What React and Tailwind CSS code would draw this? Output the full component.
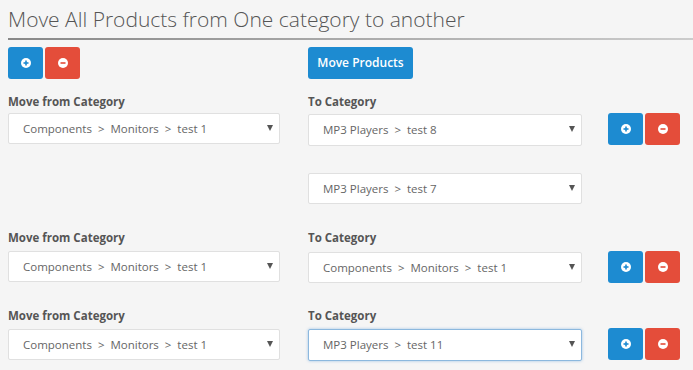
import React from "react";

const PlusIcon = ({ color }) => (
  <svg width="10" height="10" viewBox="0 0 10 10">
    <circle cx="5" cy="5" r="5" fill="#fff" />
    <rect x="2.5" y="4.2" width="5" height="1.6" fill={color} />
    <rect x="4.2" y="2.5" width="1.6" height="5" fill={color} />
  </svg>
);
const MinusIcon = ({ color }) => (
  <svg width="10" height="10" viewBox="0 0 10 10">
    <circle cx="5" cy="5" r="5" fill="#fff" />
    <rect x="2.5" y="4.2" width="5" height="1.6" fill={color} />
  </svg>
);

const BtnPair = ({ className = "" }) => (
  <div className={"flex gap-[2px] " + className}>
    <div className="w-[35px] h-[32px] rounded-[3px] bg-[#1d8bd1] flex items-center justify-center">
      <PlusIcon color="#1d8bd1" />
    </div>
    <div className="w-[35px] h-[32px] rounded-[3px] bg-[#e44d3a] flex items-center justify-center">
      <MinusIcon color="#e44d3a" />
    </div>
  </div>
);

const Select = ({ text, focus, className = "" }) => (
  <div
    className={
      "relative h-[31px] bg-white border rounded-[2px] flex items-center pl-[14px] text-[11.5px] text-[#666] " +
      (focus ? "border-[#8cb8de] shadow-[0_0_3px_rgba(100,160,220,0.6)] " : "border-[#e0e0e0] ") +
      className
    }
  >
    <span className="whitespace-pre">{text}</span>
    <span className="absolute right-[6px] top-[11px] w-0 h-0 border-l-[3px] border-r-[3px] border-t-[6px] border-l-transparent border-r-transparent border-t-[#555]" />
  </div>
);

const Label = ({ children }) => (
  <div className="text-[11.5px] font-bold text-[#555] leading-[16px] h-[16px]">{children}</div>
);

export default function App() {
  return (
    <div
      className="w-[693px] h-[370px] bg-[#f5f5f5] overflow-hidden pl-[8px]"
      style={{ fontFamily: '"Open Sans", "Liberation Sans", sans-serif' }}
    >
      <div className="pt-[4px] h-[38px] text-[21px] leading-[30px] font-light text-[#555] whitespace-nowrap">
        Move All Products from One category to another
      </div>
      <div className="h-[2px] bg-gradient-to-r from-[#888] via-[#aaa] to-[#ccc]" />
      <div className="flex mt-[7px] h-[32px]">
        <div className="w-[300px]">
          <BtnPair />
        </div>
        <div className="h-[32px] w-[105px] rounded-[3px] bg-[#1d8bd1] text-white text-[12px] font-semibold flex items-center justify-center">
          Move Products
        </div>
      </div>

      {/* Row 1 */}
      <div className="flex mt-[15px]">
        <div className="w-[300px]">
          <Label>Move from Category</Label>
          <Select className="w-[272px] mt-[3px]" text="Components  >  Monitors  >  test 1" />
        </div>
        <div>
          <Label>To Category</Label>
          <div className="flex items-start mt-[4px]">
            <Select className="w-[274px] h-[32px]" text="MP3 Players  >  test 8" />
            <BtnPair className="ml-[26px] -mt-[1px]" />
          </div>
          <Select className="w-[274px] mt-[27px]" text="MP3 Players  >  test 7" />
        </div>
      </div>

      {/* Row 2 */}
      <div className="flex mt-[26px]">
        <div className="w-[300px]">
          <Label>Move from Category</Label>
          <Select className="w-[272px] mt-[5px]" text="Components  >  Monitors  >  test 1" />
        </div>
        <div>
          <Label>To Category</Label>
          <div className="flex items-start mt-[6px]">
            <Select className="w-[274px]" text="Components  >  Monitors  >  test 1" />
            <BtnPair className="ml-[26px] -mt-[1px]" />
          </div>
        </div>
      </div>

      {/* Row 3 */}
      <div className="flex mt-[25px]">
        <div className="w-[300px]">
          <Label>Move from Category</Label>
          <Select className="w-[272px] mt-[5px]" text="Components  >  Monitors  >  test 1" />
        </div>
        <div>
          <Label>To Category</Label>
          <div className="flex items-start mt-[5px]">
            <Select className="w-[274px] h-[32px]" focus text="MP3 Players  >  test 11" />
            <BtnPair className="ml-[26px] -mt-[1px]" />
          </div>
        </div>
      </div>
    </div>
  );
}
